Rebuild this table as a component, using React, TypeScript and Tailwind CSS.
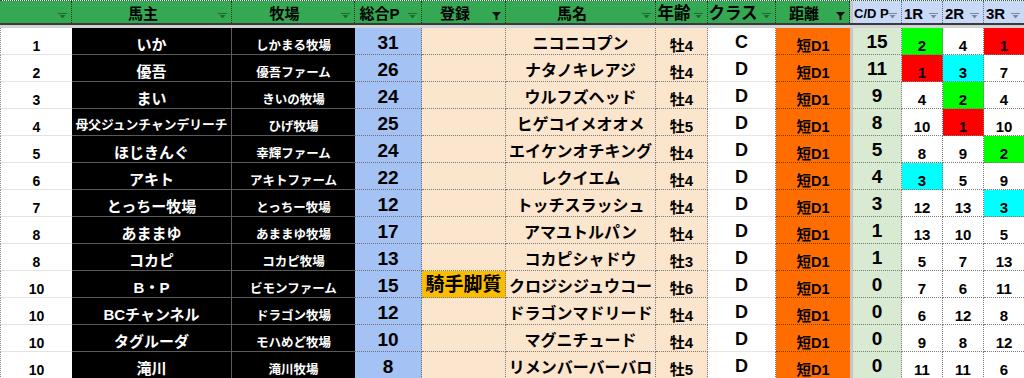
import React from 'react';

type Tone = '' | 'g' | 'r' | 'c';
interface Row {
  rank: string; owner: string; farm: string; p: string; reg: string; horse: string;
  age: string; cls: string; cd: string; rs: [string, Tone][];
}

const rows: Row[] = [
  { rank: '1', owner: 'いか', farm: 'しかまる牧場', p: '31', reg: '', horse: 'ニコニコプン', age: '牡4', cls: 'C', cd: '15', rs: [['2', 'g'], ['4', ''], ['1', 'r']] },
  { rank: '2', owner: '優吾', farm: '優吾ファーム', p: '26', reg: '', horse: 'ナタノキレアジ', age: '牡4', cls: 'D', cd: '11', rs: [['1', 'r'], ['3', 'c'], ['7', '']] },
  { rank: '3', owner: 'まい', farm: 'きいの牧場', p: '24', reg: '', horse: 'ウルフズヘッド', age: '牡4', cls: 'D', cd: '9', rs: [['4', ''], ['2', 'g'], ['4', '']] },
  { rank: '4', owner: '母父ジュンチャンデリーチ', farm: 'ひげ牧場', p: '25', reg: '', horse: 'ヒゲコイメオオメ', age: '牡5', cls: 'D', cd: '8', rs: [['10', ''], ['1', 'r'], ['10', '']] },
  { rank: '5', owner: 'ほじきんぐ', farm: '幸輝ファーム', p: '24', reg: '', horse: 'エイケンオチキング', age: '牡4', cls: 'D', cd: '5', rs: [['8', ''], ['9', ''], ['2', 'g']] },
  { rank: '6', owner: 'アキト', farm: 'アキトファーム', p: '22', reg: '', horse: 'レクイエム', age: '牡4', cls: 'D', cd: '4', rs: [['3', 'c'], ['5', ''], ['9', '']] },
  { rank: '7', owner: 'とっちー牧場', farm: 'とっちー牧場', p: '12', reg: '', horse: 'トッチスラッシュ', age: '牡4', cls: 'D', cd: '3', rs: [['12', ''], ['13', ''], ['3', 'c']] },
  { rank: '8', owner: 'あままゆ', farm: 'あままゆ牧場', p: '17', reg: '', horse: 'アマユトルパン', age: '牡4', cls: 'D', cd: '1', rs: [['13', ''], ['10', ''], ['5', '']] },
  { rank: '8', owner: 'コカピ', farm: 'コカピ牧場', p: '13', reg: '', horse: 'コカピシャドウ', age: '牡3', cls: 'D', cd: '1', rs: [['5', ''], ['7', ''], ['13', '']] },
  { rank: '10', owner: 'B・P', farm: 'ビモンファーム', p: '15', reg: '騎手脚質', horse: 'クロジシジュウコー', age: '牡6', cls: 'D', cd: '0', rs: [['7', ''], ['6', ''], ['11', '']] },
  { rank: '10', owner: 'BCチャンネル', farm: 'ドラゴン牧場', p: '12', reg: '', horse: 'ドラゴンマドリード', age: '牡4', cls: 'D', cd: '0', rs: [['6', ''], ['12', ''], ['8', '']] },
  { rank: '10', owner: 'タグルーダ', farm: 'モハめど牧場', p: '10', reg: '', horse: 'マグニチュード', age: '牡4', cls: 'D', cd: '0', rs: [['9', ''], ['8', ''], ['12', '']] },
  { rank: '10', owner: '滝川', farm: '滝川牧場', p: '8', reg: '', horse: 'リメンバーバーバロ', age: '牡5', cls: 'D', cd: '0', rs: [['11', ''], ['11', ''], ['6', '']] },
];

const GRID =
  'grid grid-cols-[72px_160px_123px_67px_84px_150px_52px_68px_74px_3px_49px_41px_41px_40px]';

const toneBg: Record<Tone, string> = {
  '': 'bg-white',
  g: 'bg-[#00ff00]',
  r: 'bg-[#ff0000]',
  c: 'bg-[#00ffff]',
};

function FilterIcon({ active }: { active?: boolean }) {
  if (active) {
    return (
      <svg width="9" height="8" viewBox="0 0 9 8" className="absolute right-[4px] top-[11px]">
        <polygon points="0,0 9,0 5.5,4 5.5,8 3.5,8 3.5,4" fill="#111" />
      </svg>
    );
  }
  return (
    <svg width="9" height="6" viewBox="0 0 9 6" className="absolute right-[4px] top-[12px]">
      <rect x="0" y="0" width="9" height="1" fill="#000" fillOpacity="0.38" />
      <polygon points="1.5,2 7.5,2 4.5,5.5" fill="#000" fillOpacity="0.38" />
    </svg>
  );
}

type Head = { label: string; bg: string; active?: boolean; cls?: string; freeze?: boolean };
const heads: Head[] = [
  { label: '', bg: 'bg-[#34a853]' },
  { label: '馬主', bg: 'bg-[#34a853]' },
  { label: '牧場', bg: 'bg-[#34a853]' },
  { label: '総合P', bg: 'bg-[#34a853]' },
  { label: '登録', bg: 'bg-[#34a853]', active: true },
  { label: '馬名', bg: 'bg-[#34a853]' },
  { label: '年齢', bg: 'bg-[#34a853]', cls: 'text-[16.5px] justify-center pr-[15px]' },
  { label: 'クラス', bg: 'bg-[#34a853]', cls: 'text-[16.5px] justify-center pr-[17px]' },
  { label: '距離', bg: 'bg-[#34a853]', active: true },
  { label: '', bg: 'bg-[#c4c6c8]', freeze: true },
  { label: 'C/D P', bg: 'bg-[#c9daf8]', cls: 'text-[13px] justify-start pl-[1px]' },
  { label: '1R', bg: 'bg-[#c9daf8]' },
  { label: '2R', bg: 'bg-[#c9daf8]' },
  { label: '3R', bg: 'bg-[#c9daf8]' },
];

const cellBase = 'flex items-end justify-center leading-none font-bold whitespace-nowrap overflow-hidden';

export default function App() {
  return (
    <div className="w-[1024px] h-[378px] overflow-hidden bg-white font-['Liberation_Sans','Noto_Sans_CJK_JP',sans-serif] text-black">
      {/* header */}
      <div className={`${GRID} h-[23px] [border-top:1px_dotted_#2a5a36]`}>
        {heads.map((h, i) =>
          h.freeze ? (
            <div key={i} className="bg-[#c4c6c8]" />
          ) : (
            <div
              key={i}
              className={`relative flex items-center pt-[3px] ${h.bg} ${
                i === 13 ? '' : i >= 10 ? '[border-right:1px_dotted_#5d6b80]' : '[border-right:1px_dotted_#15331e]'
              } ${h.cls ?? 'text-[15px] justify-center pr-[17px]'} font-bold leading-none whitespace-nowrap overflow-hidden`}
            >
              <span>{h.label}</span>
              <FilterIcon active={h.active} />
            </div>
          ),
        )}
      </div>
      <div className="h-[2px] bg-[#3a3a3a]" />
      <div className="h-[3px] bg-[#d2d3d4]" />

      {rows.map((r, idx) => (
        <div key={idx} className={`${GRID} h-[27px]`}>
          <div className={`${cellBase} bg-white text-[14px] pb-[1px] border-b border-[#e3e3e3] [border-left:1px_dotted_#8a8a8a]`}>
            {r.rank}
          </div>
          <div
            className={`${cellBase} bg-black text-white ${
              r.owner.length > 8 ? 'text-[12.75px] pb-[3px]' : 'text-[15px] pb-[2px]'
            } border-b border-r border-[#5a5a5a]`}
          >
            {r.owner}
          </div>
          <div className={`${cellBase} bg-black text-white text-[12.5px] pb-[2px] border-b border-[#5a5a5a]`}>
            {r.farm}
          </div>
          <div className={`${cellBase} bg-[#a4c2f4] text-[19px] pb-[2px] border-b border-r border-dotted border-[#6f6f6f]`}>
            {r.p}
          </div>
          <div
            className={`${cellBase} ${r.reg ? 'bg-[#fbbc04]' : 'bg-[#fce5cd]'} text-[19px] pb-[3px] border-b border-r border-dotted border-[#7a7a7a]`}
          >
            {r.reg}
          </div>
          <div className={`${cellBase} bg-[#fce5cd] text-[16px] pb-[2px] border-b border-r border-dotted border-[#7a7a7a]`}>
            {r.horse}
          </div>
          <div className={`${cellBase} bg-[#fce5cd] text-[15px] pb-[1px] border-b border-r border-dotted border-[#7a7a7a]`}>
            {r.age}
          </div>
          <div className={`${cellBase} bg-white text-[18px] pb-[3px] border-b border-[#e6e6e6] [border-right:1px_dotted_#7a7a7a]`}>
            {r.cls}
          </div>
          <div className={`${cellBase} bg-[#ff6d01] text-[14.5px] pb-[1px] border-b border-dotted border-[#6b3a10]`}>
            短D1
          </div>
          <div className="bg-[#c4c6c8]" />
          <div className={`${cellBase} bg-[#d9ead3] text-[19px] pb-[3px] border-b border-r border-dotted border-[#7a7a7a]`}>
            {r.cd}
          </div>
          {r.rs.map(([v, t], j) => (
            <div
              key={j}
              className={`${cellBase} ${toneBg[t]} text-[15px] pb-[1px] border-b ${j < 2 ? 'border-r' : ''} border-dotted border-[#7a7a7a]`}
            >
              {v}
            </div>
          ))}
        </div>
      ))}
    </div>
  );
}
